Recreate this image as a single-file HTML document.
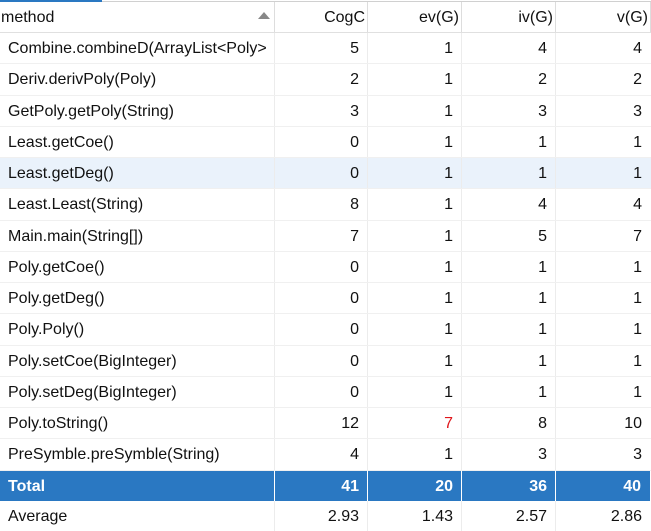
<!DOCTYPE html>
<html><head><meta charset="utf-8"><style>
*{margin:0;padding:0;box-sizing:border-box}
body{width:651px;height:531px;background:#fff;font-family:"Liberation Sans",sans-serif;font-size:16px;color:#111;overflow:hidden;position:relative}
.bar{position:absolute;left:0;top:0;width:102px;height:2px;background:#2a78c2}
.topline{position:absolute;left:102px;top:1px;width:549px;height:1px;background:#d0d0d0}
.r{position:absolute;left:0;width:651px;height:31.25px;display:flex;border-bottom:1px solid #f0f0f0}
.c{height:100%;display:flex;align-items:center;border-right:1px solid #ececec;padding:2px 8px 0;justify-content:flex-end;white-space:nowrap;overflow:hidden}
.c:nth-child(1){width:275px;justify-content:flex-start;padding-right:0}
.c:nth-child(2){width:93px}
.c:nth-child(3){width:94px}
.c:nth-child(4){width:94px}
.c:nth-child(5){width:95px;border-right:none;padding-right:9px}
.h{top:2px;height:31px;border-bottom:1px solid #e0e0e0}
.h .c{border-right:1px solid #ddd;padding-right:2px}
.h .c:nth-child(1){padding-left:1px;position:relative}
.hl{background:#eaf2fb}
.tot{background:#2a78c2;color:#fff;font-weight:bold;border-bottom:none}
.tot .c{border-right:1px solid #fff}
.red{color:#e0161b}
</style></head><body>
<div class="bar"></div><div class="topline"></div>
<div class="r h"><div class="c">method<span style="position:absolute;left:258px;top:10px;width:0;height:0;border-left:6px solid transparent;border-right:6px solid transparent;border-bottom:7px solid #888"></span></div><div class="c">CogC</div><div class="c">ev(G)</div><div class="c">iv(G)</div><div class="c">v(G)</div></div>
<div class="r" style="top:33px"><div class="c">Combine.combineD(ArrayList&lt;Poly&gt;</div><div class="c">5</div><div class="c">1</div><div class="c">4</div><div class="c">4</div></div>
<div class="r" style="top:64.25px"><div class="c">Deriv.derivPoly(Poly)</div><div class="c">2</div><div class="c">1</div><div class="c">2</div><div class="c">2</div></div>
<div class="r" style="top:95.5px"><div class="c">GetPoly.getPoly(String)</div><div class="c">3</div><div class="c">1</div><div class="c">3</div><div class="c">3</div></div>
<div class="r" style="top:126.75px"><div class="c">Least.getCoe()</div><div class="c">0</div><div class="c">1</div><div class="c">1</div><div class="c">1</div></div>
<div class="r hl" style="top:158px"><div class="c">Least.getDeg()</div><div class="c">0</div><div class="c">1</div><div class="c">1</div><div class="c">1</div></div>
<div class="r" style="top:189.25px"><div class="c">Least.Least(String)</div><div class="c">8</div><div class="c">1</div><div class="c">4</div><div class="c">4</div></div>
<div class="r" style="top:220.5px"><div class="c">Main.main(String[])</div><div class="c">7</div><div class="c">1</div><div class="c">5</div><div class="c">7</div></div>
<div class="r" style="top:251.75px"><div class="c">Poly.getCoe()</div><div class="c">0</div><div class="c">1</div><div class="c">1</div><div class="c">1</div></div>
<div class="r" style="top:283px"><div class="c">Poly.getDeg()</div><div class="c">0</div><div class="c">1</div><div class="c">1</div><div class="c">1</div></div>
<div class="r" style="top:314.25px"><div class="c">Poly.Poly()</div><div class="c">0</div><div class="c">1</div><div class="c">1</div><div class="c">1</div></div>
<div class="r" style="top:345.5px"><div class="c">Poly.setCoe(BigInteger)</div><div class="c">0</div><div class="c">1</div><div class="c">1</div><div class="c">1</div></div>
<div class="r" style="top:376.75px"><div class="c">Poly.setDeg(BigInteger)</div><div class="c">0</div><div class="c">1</div><div class="c">1</div><div class="c">1</div></div>
<div class="r" style="top:408px"><div class="c">Poly.toString()</div><div class="c">12</div><div class="c red">7</div><div class="c">8</div><div class="c">10</div></div>
<div class="r" style="top:439.25px"><div class="c">PreSymble.preSymble(String)</div><div class="c">4</div><div class="c">1</div><div class="c">3</div><div class="c">3</div></div>
<div class="r tot" style="top:470.5px;height:30px"><div class="c">Total</div><div class="c">41</div><div class="c">20</div><div class="c">36</div><div class="c">40</div></div>
<div class="r" style="top:500.5px;height:30.5px;border-bottom:none"><div class="c">Average</div><div class="c">2.93</div><div class="c">1.43</div><div class="c">2.57</div><div class="c">2.86</div></div>
</body></html>
